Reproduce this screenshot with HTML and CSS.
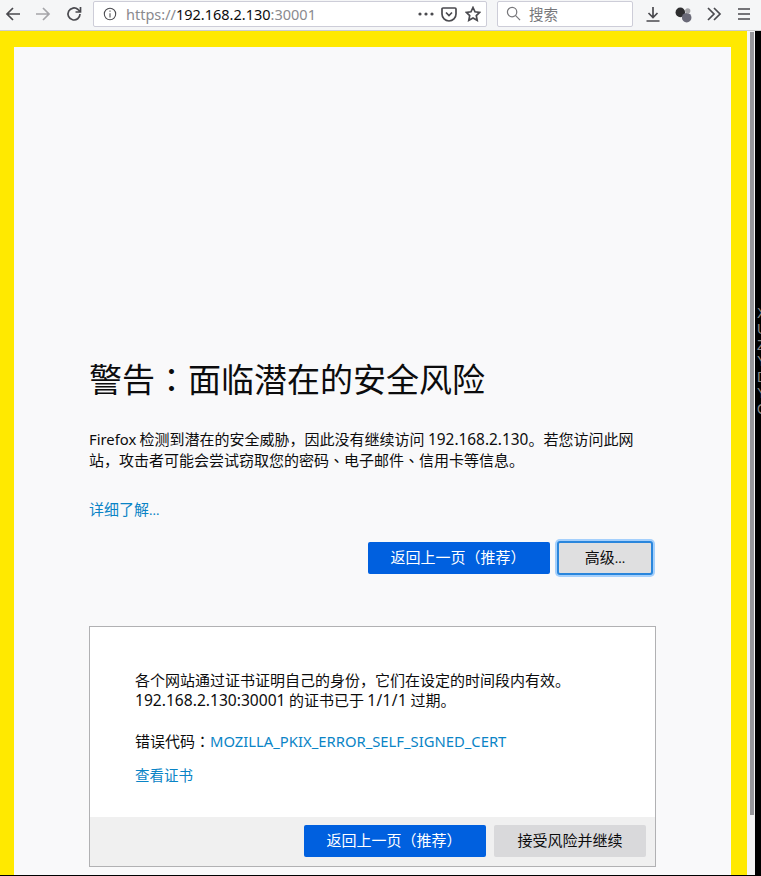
FILE: index.html
```html
<!DOCTYPE html>
<html lang="zh-CN">
<head>
<meta charset="utf-8">
<title>警告：面临潜在的安全风险</title>
<link rel="stylesheet" href="styles.css">
</head>
<body>
<header class="toolbar">
  <svg class="ic nav-back" viewBox="0 0 16 16"><path d="M15 8H2M8 2 2 8l6 6" /></svg>
  <svg class="ic nav-fwd" viewBox="0 0 16 16"><path d="M1 8h13M8 2l6 6-6 6" /></svg>
  <svg class="ic nav-reload" viewBox="0 0 16 16"><path d="M14 8a6 6 0 1 1-2-4.500L14 5.500M14.500 1v5h-5" /></svg>
  <div class="urlbar">
    <svg class="ic info" viewBox="0 0 16 16"><circle cx="8" cy="8" r="6.500"/><path d="M8 7v5M8 4v1.500"/></svg>
    <span class="url"><span class="dim">https://</span>192.168.2.130<span class="dim">:30001</span></span>
    <svg class="dots" viewBox="0 0 16 4"><circle cx="2" cy="2" r="1.600"/><circle cx="8" cy="2" r="1.600"/><circle cx="14" cy="2" r="1.600"/></svg>
    <svg class="ic pocket" viewBox="0 0 16 16"><path d="M2 2h12a1 1 0 0 1 1 1v5a7 7 0 0 1-14 0V3a1 1 0 0 1 1-1zM5 6.500l3 3 3-3"/></svg>
    <svg class="ic star" viewBox="0 0 16 16"><path d="M8 1.500l2 4.300 4.700.6-3.400 3.200.9 4.700L8 12l-4.200 2.300.9-4.700L1.300 6.400 6 5.800z"/></svg>
  </div>
  <div class="searchbar">
    <svg class="ic search" viewBox="0 0 16 16"><circle cx="6.500" cy="6.500" r="5"/><path d="M10 10l5 5"/></svg>
    <span class="search-text">搜索</span>
  </div>
  <svg class="ic download" viewBox="0 0 16 16"><path d="M8 1v10M3.500 7 8 11.500 12.500 7M1.500 15h13"/></svg>
  <svg class="balls" viewBox="0 0 16 16"><circle cx="5" cy="6" r="4.500" fill="#2e2e30"/><circle cx="11" cy="11" r="4.500" fill="#6a6a78"/><circle cx="12" cy="4.500" r="2.500" fill="#a5a5a9"/></svg>
  <svg class="ic more" viewBox="0 0 16 16"><path d="M2 2l6 6-6 6M8 2l6 6-6 6"/></svg>
  <svg class="ic menu" viewBox="0 0 16 16"><path d="M2 3h12M2 8h12M2 13h12"/></svg>
</header>
<div class="viewport">
  <div class="frame">
    <main class="page">
      <h1 class="title">警告<span class="tc" lang="zh-TW">：</span>面临潜在的安全风险</h1>
      <p class="intro"><span class="lat word">Firefox</span> 检测到潜在的安全威胁，因此没有继续访问 <span class="lat">192.168.2.130</span>。若您访问此网站，攻击者可能会尝试窃取您的密码<span class="tc" lang="zh-TW">、</span>电子邮件<span class="tc" lang="zh-TW">、</span>信用卡等信息。</p>
      <a class="link learn" href="#">详细了解<span class="lat ell">...</span></a>
      <div class="actions">
        <button class="btn primary">返回上一页<span class="tc" lang="zh-TW">（</span>推荐<span class="tc" lang="zh-TW">）</span></button>
        <button class="btn secondary focused">高级<span class="lat ell">...</span></button>
      </div>
      <section class="panel">
        <div class="panel-body">
          <p class="panel-text">各个网站通过证书证明自己的身份，它们在设定的时间段内有效。<span class="lat addr">192.168.2.130:30001</span> 的证书已于 <span class="lat date">1/1/1</span> 过期。</p>
          <p class="panel-code">错误代码<span class="tc" lang="zh-TW">：</span><a class="link lat word" href="#">MOZILLA_PKIX_ERROR_SELF_SIGNED_CERT</a></p>
          <a class="link cert" href="#">查看证书</a>
        </div>
        <div class="panel-foot">
          <button class="btn primary">返回上一页<span class="tc" lang="zh-TW">（</span>推荐<span class="tc" lang="zh-TW">）</span></button>
          <button class="btn secondary accept">接受风险并继续</button>
        </div>
      </section>
    </main>
  </div>
  <div class="scrolltrack"><div class="thumb"></div></div>
  <div class="edge">X<br>U<br>Z<br>Y<br>D<br>Y<br>O</div>
</div>
</body>
</html>
```
FILE: styles.css
```css
* { box-sizing: border-box; }
html, body { margin: 0; height: 100%; }
body {
  width: 761px; height: 876px; overflow: hidden; background: #000;
  display: flex; flex-direction: column;
  font-family: "Noto Sans CJK SC", sans-serif;
  font-size: 15px; color: #0c0c0d;
}
.lat { font-family: "Noto Sans", "Noto Sans CJK SC", sans-serif; font-size: 15.400px; line-height: 1; }
.word { font-size: 14.800px; }
.addr { font-size: 15.600px; }
.date { letter-spacing: .4px; }
.ell { font-size: 13px; }
.tc { font-family: "Noto Sans CJK TC", sans-serif; line-height: 1; }
.toolbar {
  height: 31px; flex: none; background: #f5f6f7;
  border-bottom: 1px solid #ccc;
  display: flex; align-items: center;
}
.ic { width: 16px; height: 16px; flex: none; fill: none; stroke: #4a4a4f; stroke-width: 1.7; margin-top: -2px; }
.nav-back { margin-left: 5px; }
.nav-fwd { margin-left: 14px; stroke: #a5a5a9; }
.nav-reload { margin-left: 15px; }
.urlbar {
  margin-left: 11px; width: 394px; height: 26px; margin-top: -3px;
  background: #fff; border: 1px solid #cdcdd8; border-radius: 2px;
  display: flex; align-items: center; padding-left: 9px;
}
.urlbar .ic, .searchbar .ic { margin-top: 0; }
.info { width: 14px; height: 14px; stroke-width: 1.2; }
.url { margin-left: 9px; font-family: "Noto Sans", "Noto Sans CJK SC", sans-serif; font-size: 14.500px; white-space: nowrap; color: #0c0c0d; width: 292px; }
.dim { color: #8a8a8e; }
.dots { width: 16px; height: 4px; fill: #4a4a4f; flex: none; }
.pocket { margin-left: 7px; }
.star { margin-left: 8px; }
.searchbar {
  margin-left: 10px; width: 136px; height: 26px; margin-top: -3px;
  background: #fff; border: 1px solid #cdcdd8; border-radius: 2px;
  display: flex; align-items: center; padding-left: 8px;
}
.search { width: 15px; height: 15px; stroke: #77777b; stroke-width: 1.3; }
.search-text { margin-left: 8px; font-size: 14.500px; color: #77777b; }
.download { margin-left: 12px; }
.balls { width: 17px; height: 17px; margin-left: 14px; flex: none; margin-top: -2px; }
.more { margin-left: 14px; }
.menu { margin-left: 14px; }
.viewport { height: 844px; flex: none; display: flex; margin-bottom: 1px; }
.frame {
  width: 747px; flex: none; background: #ffe900;
  padding: 16px 16px 0 14px; display: flex;
}
.page { flex: 1; background: #f9f9fa; padding: 311px 75px 0; overflow: hidden; }
.title { margin: 0; font-size: 33px; font-weight: 400; line-height: 40px; white-space: nowrap; }
.intro { margin: 30px 0 0; line-height: 21px; }
.link { color: #0a84c6; text-decoration: none; }
.learn { display: block; margin-top: 28px; line-height: 22px; }
.actions { display: flex; justify-content: flex-end; gap: 8px; margin-top: 22px; padding-right: 4px; }
.btn {
  font: inherit; border: 0; border-radius: 2px; height: 32px; padding: 0 0 3px;
  display: block; color: #0c0c0d;
}
.primary { width: 182px; background: #0060df; color: #fff; padding-right: 2px; }
.secondary { background: #dfdfe0; }
.focused { width: 94px; outline: 2px solid #2a86dc; outline-offset: -1px; box-shadow: 0 0 0 3px rgba(10,132,255,.35); }
.panel {
  margin-top: 52px; height: 241px; background: #fff;
  border: 1px solid #b1b1b3; display: flex; flex-direction: column;
}
.panel-body { flex: 1; padding: 43px 45px 0; }
.panel-text { margin: 0; line-height: 20px; }
.panel-code { margin: 20px 0 0; line-height: 21px; white-space: nowrap; }
.cert { display: block; margin-top: 13px; line-height: 21px; font-size: 14.500px; }
.panel-foot {
  height: 49px; flex: none; background: #f0f0f0; padding: 8px 9px 0 0;
  display: flex; justify-content: flex-end; gap: 8px;
}
.accept { width: 152px; background: #d9d9db; }
.scrolltrack { width: 8px; flex: none; background: #f5f5f5; padding-left: 3px; }
.thumb { width: 4px; height: 783px; margin-top: 1px; background: #97979b; }
.edge {
  flex: 1; background: #000; color: #8a8a8a; overflow: hidden;
  font-size: 14px; line-height: 16px; padding: 274px 0 0 2px; white-space: nowrap;
  font-family: "Liberation Sans", sans-serif;
}
```
